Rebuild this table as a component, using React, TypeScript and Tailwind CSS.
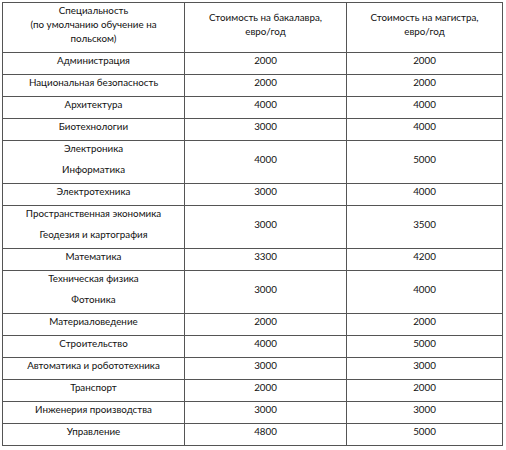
const rows: { name: string[]; bach: string; mag: string }[] = [
  { name: ['Администрация'], bach: '2000', mag: '2000' },
  { name: ['Национальная безопасность'], bach: '2000', mag: '2000' },
  { name: ['Архитектура'], bach: '4000', mag: '4000' },
  { name: ['Биотехнологии'], bach: '3000', mag: '4000' },
  { name: ['Электроника', 'Информатика'], bach: '4000', mag: '5000' },
  { name: ['Электротехника'], bach: '3000', mag: '4000' },
  { name: ['Пространственная экономика', 'Геодезия и картография'], bach: '3000', mag: '3500' },
  { name: ['Математика'], bach: '3300', mag: '4200' },
  { name: ['Техническая физика', 'Фотоника'], bach: '3000', mag: '4000' },
  { name: ['Материаловедение'], bach: '2000', mag: '2000' },
  { name: ['Строительство'], bach: '4000', mag: '5000' },
  { name: ['Автоматика и робототехника'], bach: '3000', mag: '3000' },
  { name: ['Транспорт'], bach: '2000', mag: '2000' },
  { name: ['Инженерия производства'], bach: '3000', mag: '3000' },
  { name: ['Управление'], bach: '4800', mag: '5000' },
];

const cell = 'border border-[#555] text-center align-middle p-0';

export default function App() {
  return (
    <div
      className="w-[506px] h-[450px] bg-white pt-[2px] pl-[2px] text-[9.8px] leading-[14px] text-[#111]"
      style={{ fontFamily: 'Lato, "Liberation Sans", sans-serif' }}
    >
      <table className="border-collapse w-[500px] table-fixed">
        <colgroup>
          <col className="w-[182px]" />
          <col className="w-[162px]" />
          <col className="w-[156px]" />
        </colgroup>
        <thead>
          <tr>
            <th className={`${cell} font-normal`}>
              <p className="mb-[7px]">
                Специальность
                <br />
                (по умолчанию обучение на
                <br />
                польском)
              </p>
            </th>
            <th className={`${cell} font-normal`}>
              <p className="mb-[7px]">
                Стоимость на бакалавра,
                <br />
                евро/год
              </p>
            </th>
            <th className={`${cell} font-normal`}>
              <p className="mb-[7px]">
                Стоимость на магистра,
                <br />
                евро/год
              </p>
            </th>
          </tr>
        </thead>
        <tbody>
          {rows.map((r) => (
            <tr key={r.name.join('|')}>
              <td className={cell}>
                {r.name.map((n) => (
                  <p key={n} className="mb-[7px]">
                    {n}
                  </p>
                ))}
              </td>
              <td className={cell}>
                <p className="mb-[7px]">{r.bach}</p>
              </td>
              <td className={cell}>
                <p className="mb-[7px]">{r.mag}</p>
              </td>
            </tr>
          ))}
        </tbody>
      </table>
    </div>
  );
}
